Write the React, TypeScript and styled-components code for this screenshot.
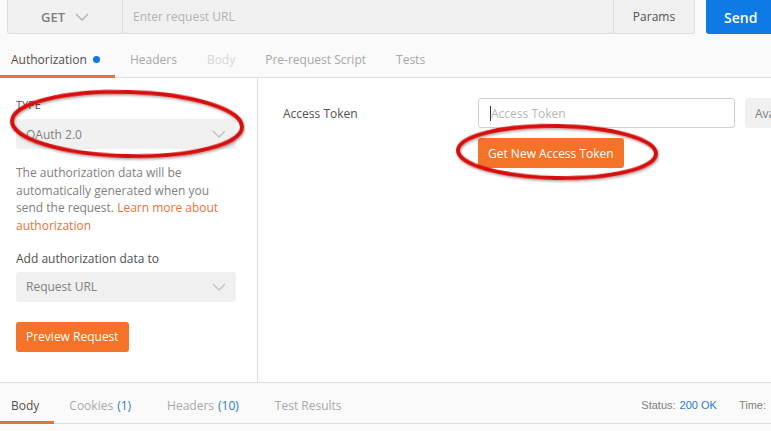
import styled, { createGlobalStyle } from 'styled-components';

const GlobalStyle = createGlobalStyle`
  html, body {
    margin: 0;
    padding: 0;
    background: #fff;
  }
  * {
    box-sizing: border-box;
  }
`;

const Chevron = ({ color = '#b3b3b3' }: { color?: string }) => (
  <svg width="14" height="8" viewBox="0 0 14 8">
    <path d="M1 1 L7 7 L13 1" fill="none" stroke={color} strokeWidth="1.4" />
  </svg>
);

const requestTabs = [
  { label: 'Authorization', active: true, dot: true },
  { label: 'Headers' },
  { label: 'Body', disabled: true },
  { label: 'Pre-request Script' },
  { label: 'Tests' },
];

const responseTabs = [
  { label: 'Body', active: true },
  { label: 'Cookies', count: '(1)' },
  { label: 'Headers', count: '(10)' },
  { label: 'Test Results' },
];

const App = () => {
  return (
    <Page>
      <GlobalStyle />
      <TopBar>
        <UrlGroup>
          <MethodSelect>
            GET
            <Chevron />
          </MethodSelect>
          <UrlInput>Enter request URL</UrlInput>
          <ParamsButton>Params</ParamsButton>
        </UrlGroup>
        <SendButton>Send</SendButton>
      </TopBar>

      <TabRow>
        {requestTabs.map((tab, idx) => (
          <Tab
            key={tab.label}
            $active={tab.active}
            $disabled={tab.disabled}
            $first={idx === 0}
          >
            {tab.label}
            {tab.dot && <Dot />}
          </Tab>
        ))}
      </TabRow>

      <Main>
        <Sidebar>
          <FieldLabel>Type</FieldLabel>
          <Select>
            OAuth 2.0
            <Chevron color="#c2c2c2" />
          </Select>
          <Description>
            The authorization data will be automatically generated when you
            send the request. <Link>Learn more about authorization</Link>
          </Description>
          <AddLabel>Add authorization data to</AddLabel>
          <Select>
            Request URL
            <Chevron color="#c2c2c2" />
          </Select>
          <OrangeButton $mt={20}>Preview Request</OrangeButton>
        </Sidebar>

        <Content>
          <TokenRow>
            <TokenLabel>Access Token</TokenLabel>
            <TokenColumn>
              <TokenFields>
                <TokenInput>
                  <Caret />
                  Access Token
                </TokenInput>
                <AvailableButton>Available Tokens</AvailableButton>
              </TokenFields>
              <OrangeButton $mt={10}>Get New Access Token</OrangeButton>
            </TokenColumn>
          </TokenRow>
        </Content>
      </Main>

      <ResponseBar>
        <ResponseTabs>
          {responseTabs.map((tab, idx) => (
            <ResponseTab key={tab.label} $active={tab.active} $first={idx === 0}>
              {tab.label}
              {tab.count && <Count>{tab.count}</Count>}
            </ResponseTab>
          ))}
        </ResponseTabs>
        <Meta>
          Status: <MetaValue>200 OK</MetaValue>
          <MetaGap />
          Time:
        </Meta>
      </ResponseBar>

      <Marks width="771" height="431" viewBox="0 0 771 431">
        <defs>
          <filter id="shade" x="-10%" y="-20%" width="120%" height="140%">
            <feDropShadow dx="1" dy="1.5" stdDeviation="1" floodColor="#000" floodOpacity="0.35" />
          </filter>
        </defs>
        <ellipse
          cx="127"
          cy="124"
          rx="115"
          ry="32"
          transform="rotate(1.5 127 124)"
          fill="none"
          stroke="#d80a0a"
          strokeWidth="4"
          filter="url(#shade)"
        />
        <ellipse
          cx="557"
          cy="152"
          rx="99"
          ry="26"
          transform="rotate(1 557 152)"
          fill="none"
          stroke="#d80a0a"
          strokeWidth="4"
          filter="url(#shade)"
        />
      </Marks>
    </Page>
  );
};

export default App;

const Page = styled.div`
  position: relative;
  width: 771px;
  height: 431px;
  overflow: hidden;
  background: #fafafa;
  font-family: 'Open Sans', 'Noto Sans', sans-serif;
  color: #505050;
  display: flex;
  flex-direction: column;
`;

const TopBar = styled.div`
  display: flex;
  height: 34px;
  padding-left: 7px;
  gap: 11px;
  flex-shrink: 0;
`;

const UrlGroup = styled.div`
  display: flex;
  width: 688px;
  flex-shrink: 0;
  background: #f0f0f0;
  border: 1px solid #dcdcdc;
  border-top: none;
  border-radius: 0 0 3px 3px;
`;

const MethodSelect = styled.div`
  width: 115px;
  display: flex;
  align-items: center;
  gap: 10px;
  padding-left: 33px;
  font-size: 13px;
  font-weight: 600;
  color: #808080;
  border-right: 1px solid #dcdcdc;
`;

const UrlInput = styled.div`
  flex: 1;
  display: flex;
  align-items: center;
  padding-left: 10px;
  font-size: 12px;
  color: #b3b3b3;
`;

const ParamsButton = styled.div`
  width: 81px;
  display: flex;
  align-items: center;
  justify-content: center;
  font-size: 12px;
  color: #505050;
  border-left: 1px solid #dcdcdc;
`;

const SendButton = styled.div`
  width: 80px;
  flex-shrink: 0;
  display: flex;
  align-items: center;
  padding-left: 18px;
  background: #0d7ae6;
  color: #fff;
  font-size: 14px;
  font-weight: 600;
  border-radius: 0 0 0 3px;
`;

const TabRow = styled.div`
  display: flex;
  height: 34px;
  margin-top: 10px;
  border-bottom: 1px solid #dedede;
  flex-shrink: 0;
`;

const Tab = styled.div<{ $active?: boolean; $disabled?: boolean; $first?: boolean }>`
  display: flex;
  align-items: center;
  gap: 6px;
  padding: 0 15px 0 ${({ $first }) => ($first ? 11 : 15)}px;
  font-size: 12px;
  color: ${({ $active, $disabled }) => ($active ? '#505050' : $disabled ? '#d6d6d6' : '#a8a8a8')};
  border-bottom: 3px solid ${({ $active }) => ($active ? '#e4743a' : 'transparent')};
  margin-bottom: -1px;
`;

const ResponseTab = styled(Tab)`
  padding-top: 7px;
`;

const Dot = styled.span`
  width: 7px;
  height: 7px;
  border-radius: 50%;
  background: #0d7ae6;
`;

const Main = styled.div`
  display: flex;
  height: 304px;
  background: #fff;
  flex-shrink: 0;
`;

const Sidebar = styled.div`
  width: 258px;
  flex-shrink: 0;
  padding: 19px 21px 0 16px;
  border-right: 1px solid #dedede;
  display: flex;
  flex-direction: column;
`;

const FieldLabel = styled.div`
  font-size: 11px;
  text-transform: uppercase;
  color: #505050;
  line-height: 16px;
  margin-bottom: 6px;
`;

const Select = styled.div`
  height: 30px;
  display: flex;
  align-items: center;
  justify-content: space-between;
  padding: 0 10px;
  background: #f0f0f0;
  border-radius: 3px;
  font-size: 12px;
  color: #808080;
`;

const Description = styled.div`
  margin-top: 15px;
  font-size: 12px;
  line-height: 17.7px;
  color: #808080;
  width: 212px;
`;

const Link = styled.span`
  color: #e4743a;
`;

const AddLabel = styled.div`
  margin-top: 16px;
  margin-bottom: 5px;
  font-size: 12px;
  line-height: 16px;
  color: #505050;
`;

const OrangeButton = styled.div<{ $mt: number }>`
  align-self: flex-start;
  margin-top: ${({ $mt }) => $mt}px;
  height: 30px;
  padding: 0 10px;
  display: flex;
  align-items: center;
  background: #f47328;
  color: #fff;
  font-size: 12px;
  border-radius: 3px;
`;

const Content = styled.div`
  flex: 1;
  min-width: 0;
  overflow: hidden;
  padding: 20px 0 0 25px;
`;

const TokenRow = styled.div`
  display: flex;
`;

const TokenLabel = styled.div`
  width: 195px;
  flex-shrink: 0;
  height: 30px;
  display: flex;
  align-items: center;
  font-size: 12px;
  color: #505050;
`;

const TokenColumn = styled.div`
  display: flex;
  flex-direction: column;
  flex-shrink: 0;
`;

const TokenFields = styled.div`
  display: flex;
  gap: 10px;
`;

const TokenInput = styled.div`
  width: 257px;
  flex-shrink: 0;
  height: 30px;
  display: flex;
  align-items: center;
  padding-left: 11px;
  border: 1px solid #cfcfcf;
  border-radius: 3px;
  font-size: 12px;
  color: #b8b8b8;
`;

const Caret = styled.span`
  width: 1px;
  height: 15px;
  background: #333;
`;

const AvailableButton = styled.div`
  height: 30px;
  display: flex;
  align-items: center;
  padding: 0 10px;
  background: #f0f0f0;
  border-radius: 3px;
  font-size: 12px;
  color: #808080;
  white-space: nowrap;
`;

const ResponseBar = styled.div`
  display: flex;
  justify-content: space-between;
  align-items: stretch;
  height: 42px;
  border-top: 1px solid #dedede;
  border-bottom: 1px solid #dedede;
  flex-shrink: 0;
`;

const ResponseTabs = styled.div`
  display: flex;
`;

const Count = styled.span`
  color: #2a7bc0;
  margin-left: -2px;
  margin-right: 6px;
`;

const Meta = styled.div`
  display: flex;
  align-items: center;
  gap: 4px;
  padding-top: 4px;
  margin-right: 5px;
  font-family: 'Liberation Sans', Arial, sans-serif;
  font-size: 11px;
  color: #808080;
  white-space: nowrap;
`;

const MetaValue = styled.span`
  color: #2a7bc0;
`;

const MetaGap = styled.span`
  width: 14px;
`;

const Marks = styled.svg`
  position: absolute;
  left: 0;
  top: 0;
  pointer-events: none;
`;
